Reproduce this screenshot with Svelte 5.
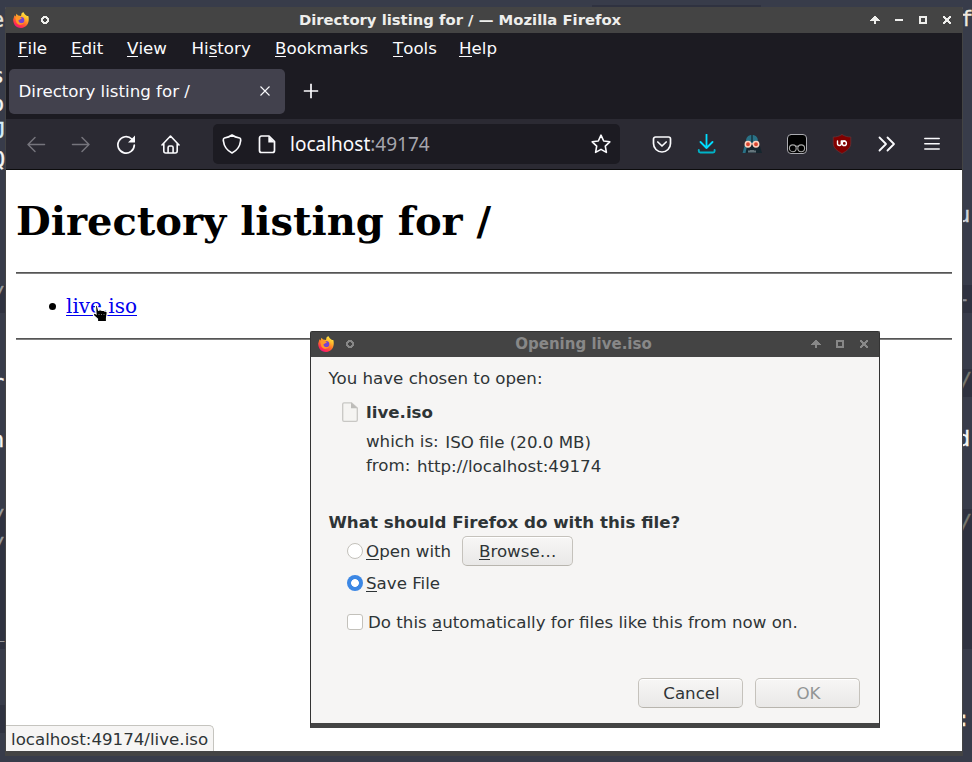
<script>
  const menus = [
    ['', 'F', 'ile', 18],
    ['', 'E', 'dit', 71],
    ['', 'V', 'iew', 127],
    ['Hi', 's', 'tory', 191.5],
    ['', 'B', 'ookmarks', 275],
    ['', 'T', 'ools', 393],
    ['', 'H', 'elp', 459]
  ];
  const left = [
    ['e', -9, 6, '#e8e4da'], ['s', -9, 62, '#f5f5f5'], ['o', -9, 90, '#f5f5f5'],
    ['J', -7, 117, '#d5eefa'], ['Q', -8, 146, '#f5f5f5'], ['/', -8, 281, '#999a9b'],
    ['r', -9, 369, '#f5f5f5'], ['n', -9, 426, '#f5f5f5'], ['/', -8, 504, '#999a9b'], ['/', -8, 532, '#999a9b'], ['_', -9, 616, '#999a9b']
  ];
  const right = [
    ['f', 960, 5, '#eee8de'], ['u', 957, 201, '#d0d6dd'], ['-', 957, 285, '#8c9099'], ['/', 959, 367, '#77786f'],
    ['d', 957, 425, '#f5f5f5'], ['/', 959, 509, '#77786f'], [':', 957, 705, '#f6efdc']
  ];
  const bands = [[0, 285, 28], [0, 509, 140], [0, 705, 28], [962, 285, 28], [962, 369, 28], [962, 509, 140]];
</script>

{#snippet fox()}
  <svg class="fox" viewBox="0 0 16 16">
    <defs>
      <linearGradient id="flame" x1=".8" y1="0" x2=".25" y2="1">
        <stop offset="0" stop-color="#fff34a" /><stop offset=".32" stop-color="#ffb82b" />
        <stop offset=".6" stop-color="#ff6a2b" /><stop offset=".85" stop-color="#ff2756" /><stop offset="1" stop-color="#e31587" />
      </linearGradient>
    </defs>
    <path fill="url(#flame)" d="M1.5 3.2 2.5 4.4 3.5 1.8 5 3.6 8 4 8.5 1.4 10.2 0 12 2.5 14 4 15.3 4.1C16.8 9.4 14.5 15.8 8.1 15.9 2.8 16 .1 12 .2 7.6Z" />
    <circle cx="8.1" cy="8.1" r="3.2" fill="#7542d3" />
    <path fill="#ff9727" d="M2.2 5.4 6 4.3 9 6.2 7 7.4 5.5 8.3C5.4 11 8.4 12.3 11 10.6 9.5 14 5 13.2 3.4 10.5Z" />
  </svg>
{/snippet}
{#snippet ring()}<svg class="px" viewBox="0 0 8 8"><path fill-rule="evenodd" d="M2 0h4v1h1v1h1v4H7v1H6v1H2V7H1V6H0V2h1V1h1zM3 2v1H2v2h1v1h2V5h1V3H5V2z" /></svg>{/snippet}
{#snippet up()}<svg class="px up" viewBox="0 0 10 8"><path d="M4 0h2v1h1v1h1v1h1v1h1v1H6v3H4V5H0V4h1V3h1V2h1V1h1z" /></svg>{/snippet}
{#snippet max()}<svg class="px" viewBox="0 0 8 8"><path fill-rule="evenodd" d="M0 0h8v8H0zM2 2v4h4V2z" /></svg>{/snippet}
{#snippet close()}<svg class="px" viewBox="0 0 8 8"><path d="M0 0h2v1h1v1h2V1h1V0h2v2H7v1H6v2h1v1h1v2H6V7H5V6H3v1H2v1H0V6h1V5h1V3H1V2H0z" /></svg>{/snippet}

<div class="desktop">
  {#each bands as [x, y, h]}<i class="band" style="left:{x}px;top:{y}px;height:{h}px"></i>{/each}
  {#each [...left, ...right] as [c, x, y, color]}
    <span class="term" style="left:{x}px;top:{y}px;color:{color}">{c}</span>
  {/each}
  <div class="topshade"></div>

  <section class="window">
    <header class="title">
      {@render fox()}{@render ring()}
      <b>Directory listing for / — Mozilla Firefox</b>
      <div class="controls">
        {@render up()}
        <svg class="px" viewBox="0 0 8 8"><path d="M0 3h8v2H0z" /></svg>
        {@render max()}{@render close()}
      </div>
    </header>
    <nav class="menu">
      {#each menus as [a, u, b, x], i}
        <span style="width:{(menus[i + 1]?.[3] ?? 530) - x}px">{a}<u>{u}</u>{b}</span>
      {/each}
    </nav>
    <div class="tabs">
      <div class="tab"><span>Directory listing for /</span>
        <svg width="10" height="10" viewBox="0 0 10 10"><path d="M.5.5l9 9m0-9-9 9" /></svg>
      </div>
      <svg class="plus" width="16" height="16" viewBox="0 0 16 16"><path d="M8 .8v14.4M.8 8h14.4" /></svg>
    </div>
    <div class="toolbar">
      <div class="navs">
        <svg class="dim" viewBox="0 0 20 20"><path d="M18.5 10.5H2M9 3.500l-7 7 7 7" /></svg>
        <svg class="dim" viewBox="0 0 20 20"><path d="M1.500 10.500H18M11 3.500l7 7-7 7" /></svg>
        <svg viewBox="0 0 20 20"><path stroke-width="1.7" d="M15.8 5A8.2 8.2 0 1 0 18.3 11" /><path fill="#fbfbfe" stroke="none" d="M19 1.500v7h-7z" /></svg>
        <svg viewBox="0 0 20 20"><path stroke-width="1.6" d="M1 11 9.500 2l8.500 9M2.800 9.500V17a2 2 0 0 0 2 2h9.400a2 2 0 0 0 2-2V9.500M7.100 19v-5.500q0-1.500 1.500-1.500h2q1.500 0 1.500 1.500V19" /></svg>
      </div>
      <div class="url">
        <svg viewBox="0 0 20 20"><path stroke-width="1.7" d="M10 1C7.500 2.800 5 3.500 2.400 4 1 4.300 1.200 5.400 1.400 7c.7 6 3.600 9.500 8.600 12 5-2.500 7.900-6 8.600-12 .2-1.600.4-2.700-1-3-2.600-.5-5.100-1.200-7.600-3Z" /></svg>
        <svg viewBox="0 0 20 20"><path stroke-width="1.7" d="M4.500 2H12l5.500 5.500v9a2 2 0 0 1-2 2h-11a2 2 0 0 1-2-2V4a2 2 0 0 1 2-2Z" /><path fill="#fbfbfe" stroke="none" d="M11.300 2v6.400h6.500z" /></svg>
        <span class="address">localhost<em>:49174</em></span>
        <svg viewBox="0 0 20 20"><path stroke-width="1.6" d="M10 1.200 12.700 7l6.100.8-4.500 4.300 1.100 6.300L10 15.400l-5.400 3 1.100-6.300L1.200 7.800 7.300 7Z" /></svg>
      </div>
      <div class="actions">
        <svg viewBox="0 0 20 20"><path stroke-width="1.7" d="M3.500 3h13a2 2 0 0 1 2 2v4.500a8.500 8.500 0 0 1-17 0V5a2 2 0 0 1 2-2ZM5.800 8l4.200 4 4.200-4" /></svg>
        <svg class="down" viewBox="0 0 20 20"><path d="M9.500 .5V14M3.500 8l6 6 6-6" /><path stroke="#00b3c8" stroke-width="1.900" d="M1.800 16v1q0 1.500 1.500 1.500h12.800q1.500 0 1.500-1.500v-1" /></svg>
        <svg viewBox="0 0 20 20" class="vader"><path fill="#15262f" d="M5 4 2.500 12 0 19h20l-2.500-8L15 4Z" /><path fill="#2a7186" d="M4 9C3.500 3.500 6 1 10 1s6.500 2.500 6 8ZM3 10l-2.500 9h3L5 12Z" /><path fill="#163842" d="M9.200 1h1.600v7H9.200z" /><circle cx="6" cy="10.300" r="2.700" fill="#d7452f" stroke="#ffd3c0" stroke-width="1.500" /><circle cx="14" cy="10.300" r="2.700" fill="#d7452f" stroke="#ffd3c0" stroke-width="1.500" /><path stroke="#ffc9b5" stroke-width="1.200" d="M8.500 9.800h3" /><path stroke="#b6c4ca" stroke-width="1" stroke-linecap="butt" d="M7 18.500v-2m2 2v-2.500m2 2.500v-2.500m2 2.500v-2" /></svg>
        <svg viewBox="0 0 20 20"><rect x=".5" y=".5" width="19" height="19" rx="3.500" fill="#000" stroke="#aaaab0" stroke-width="1" /><g stroke="#a5a5a5" stroke-width="1.100"><circle cx="5.800" cy="14.300" r="3.400" /><circle cx="14.200" cy="14.300" r="3.400" /><path d="M8.500 12.500q1.500-1 3 0" /></g></svg>
        <svg viewBox="0 0 20 20"><path fill="#800000" stroke="#65373b" stroke-width=".7" d="M10 .5C7 2.500 4 3 1.200 3v6c0 5 4 8 8.800 10.500C14.800 17 18.800 14 18.800 9V3C16 3 13 2.500 10 .5Z" /><path stroke="#fff" stroke-width="1.400" d="M5.500 7v2.800c0 2.200 3.800 2.200 3.800 0V7H13" /><circle cx="12.300" cy="9.400" r="2.100" stroke="#fff" stroke-width="1.400" /></svg>
        <svg viewBox="0 0 20 20"><path stroke-width="1.800" d="M2.500 3.500 9 10l-6.500 6.500M10.500 3.500 17 10l-6.500 6.500" /></svg>
        <svg viewBox="0 0 20 20"><path stroke-width="1.500" d="M2.800 4.500h14.400M2.800 9.800h14.400M2.800 15.100h14.400" /></svg>
      </div>
    </div>
    <main>
      <h1>Directory listing for /</h1>
      <hr />
      <ul><li><a href="#live">live.iso</a></li></ul>
      <hr />
    </main>
    <div class="status">localhost:49174/live.iso</div>
  </section>

  <svg class="cursor" width="18" height="20" viewBox="0 0 18 20"><path fill="#000" stroke="#fff" stroke-width="1.200" d="M4.500 1.500Q5.500.8 6.500 2l1 4.200 2.100-.5 1.400.8 1.700-.2 1.200.8h1.400q1 .5.900 2L15.500 14v3.500H6.500V15L2.500 11.500v-2q1-.9 2.500.4Z" /><path stroke="#777" d="M7.500 10.500h1m1.500 0h1m1.500 0h1" /></svg>

  <section class="dialog">
    <header class="title muted">
      {@render fox()}{@render ring()}
      <b>Opening live.iso</b>
      <div class="controls">{@render up()}{@render max()}{@render close()}</div>
    </header>
    <div class="body">
      <p class="intro">You have chosen to open:</p>
      <div class="file">
        <svg width="16" height="20" viewBox="0 0 16 20"><path fill="#f5f4f2" stroke="#c8c7c4" stroke-width="1.300" d="M2 .8h7.500L15.300 6v12a1.300 1.300 0 0 1-1.300 1.300H2A1.300 1.300 0 0 1 .7 18V2A1.300 1.300 0 0 1 2 .8Z" /><path fill="#bdbcb9" d="M9 .5V6.200h6.500z" /></svg>
        <b>live.iso</b>
      </div>
      <div class="meta"><span>which is:</span><span class="value">ISO file (20.0 MB)</span></div>
      <div class="meta"><span>from:</span><span class="value">http://localhost:49174</span></div>
      <b class="question">What should Firefox do with this file?</b>
      <div class="option open"><i class="radio"></i><span class="label"><u>O</u>pen with</span><button><span><u>B</u>rowse…</span></button></div>
      <div class="option save"><i class="radio on"></i><span class="label"><u>S</u>ave File</span></div>
      <div class="option auto"><i class="check"></i><span class="label">Do this <u>a</u>utomatically for files like this from now on.</span></div>
      <div class="buttons"><button>Cancel</button><button disabled>OK</button></div>
    </div>
  </section>
</div>

<style>
  :global(body) { margin: 0; }
  .desktop { position: relative; width: 972px; height: 762px; overflow: hidden; background: #383c4a; font: 16.67px/20px "DejaVu Sans", sans-serif; }
  .desktop * { box-sizing: border-box; }
  .band { position: absolute; width: 10px; background: #2f3240; }
  .term { position: absolute; font: 22px/28px "DejaVu Sans Mono", monospace; -webkit-text-stroke: .3px currentColor; }
  .topshade { position: absolute; left: 592px; top: 5px; width: 169px; height: 2px; background: #2f3240; }
  u { text-decoration: none; box-shadow: 0 1px currentColor; display: inline-block; line-height: 14px; }
  svg { fill: none; flex: none; display: block; }
  .window { position: absolute; left: 5px; top: 7px; width: 958px; height: 749px; border: 1px solid #444; border-top: 0; border-bottom: 5px solid #444; display: flex; flex-direction: column; background: #fff; border-radius: 2px 2px 0 0; }
  .title { position: relative; height: 26px; flex: none; display: flex; align-items: center; background: #444; color: #eeeeec; padding: 0 11px 0 7px; }
  .title b { position: absolute; left: -48px; right: 0; text-align: center; font-size: 14.8px; line-height: 26px; pointer-events: none; }
  .fox { width: 16px; height: 16px; margin-right: 12px; }
  .px { width: 8px; height: 8px; fill: currentColor; shape-rendering: crispEdges; }
  .px.up { width: 10px; margin-right: -1px; }
  .controls { margin-left: auto; display: flex; gap: 16px; }
  .menu { height: 36px; flex: none; background: #1c1b22; color: #fbfbfe; display: flex; padding: 6px 0 0 12px; white-space: nowrap; }
  .tabs { height: 50px; flex: none; background: #1c1b22; color: #fbfbfe; display: flex; padding-left: 3px; }
  .tab { width: 276px; height: 45px; border-radius: 5px; background: #42414d; display: flex; align-items: center; justify-content: space-between; padding: 0 15px 0 9.500px; }
  .tab svg, .plus { stroke: #fbfbfe; stroke-width: 1.1; }
  .tab svg { margin-top: -1px; }
  .plus { margin: 14px 0 0 18px; stroke-width: 1.7; }
  .toolbar { height: 51px; flex: none; background: #2b2a33; border-bottom: 1px solid #0c0c0d; display: flex; align-items: center; }
  .toolbar svg { width: 20px; height: 20px; stroke: #fbfbfe; stroke-width: 1.5; stroke-linejoin: round; stroke-linecap: round; }
  .toolbar .vader { stroke: none; }
  .toolbar .dim { stroke: #75747c; }
  .toolbar .down { stroke: #00ddff; stroke-width: 1.8; }
  .navs { display: flex; gap: 25px; width: 207px; padding-left: 20px; }
  .url { width: 407px; height: 40px; border-radius: 5px; background: #1c1b22; display: flex; align-items: center; padding: 0 9px; }
  .url svg + svg { margin-left: 15px; }
  .address { margin: 0 0 0 13px; flex: 1; color: #fbfbfe; font: 19px/24px "Noto Sans", sans-serif; }
  .address em { font-style: normal; color: #a5a5ad; }
  .actions { display: flex; gap: 25px; padding-left: 32px; }
  main { padding: 27px 10px 0; font: 20px/24px "DejaVu Serif", serif; color: #000; }
  h1 { margin: 0 0 28px; font-size: 40px; line-height: 47px; }
  hr { height: 2px; margin: 0; border: 0; background: #808080; border-top: 1px solid #555; }
  ul { margin: 20px 0; padding: 0; list-style: none; }
  li { display: flex; align-items: center; padding-left: 33px; }
  li::before { content: ''; width: 7px; height: 7px; margin: 1px 10px 0 0; border-radius: 50%; background: #000; }
  a { color: #0000ee; text-underline-offset: 2px; text-decoration-thickness: 1px; }
  .status { margin-top: auto; width: 208px; height: 26px; border: 1px solid #c5c4bf; border-left: 0; border-bottom: 0; border-radius: 0 5px 0 0; background: #f6f5f4; color: #2e3436; padding: 4px 0 0 5px; }
  .cursor { position: absolute; left: 91px; top: 304px; }
  .dialog { position: absolute; left: 310px; top: 331px; width: 570px; height: 397px; border: 1px solid #333; border-bottom: 5px solid #444; background: #f6f5f4; color: #2e3436; border-radius: 2px 2px 0 0; }
  .title.muted { height: 25px; color: #888; padding-bottom: 1px; }
  .title.muted b { left: -23px; font-size: 15px; line-height: 24px; top: 0; }
  .body { display: flex; flex-direction: column; padding: 12px 19px 0 17.500px; height: 366px; }
  .intro { margin: 0; }
  .file { display: flex; gap: 8px; align-items: center; margin: 13px 0 8px 13.500px; height: 22px; }
  .file svg { margin-top: -2px; }
  .meta { display: flex; gap: 6.500px; padding-left: 37.500px; height: 24px; }
  .value { padding-top: 1px; }
  .question { margin-top: 33px; height: 20px; }
  .option { display: flex; align-items: center; padding-left: 18.500px; height: 30px; gap: 3px; }
  .label { padding-top: 2px; }
  .open { margin-top: 3px; }
  .save { margin-top: 2px; }
  .auto { margin-top: 9px; gap: 5px; }
  .radio, .check { width: 16px; height: 16px; background: #fff; border: 1px solid #c3c1bb; border-radius: 50%; }
  .radio.on { width: 16px; border: 0; background: radial-gradient(circle, #fff 3.500px, #3c87e4 4.300px); }
  .check { border-radius: 3px; }
  button { height: 30px; border: 1px solid #c5c2bc; border-bottom-color: #b8b5ae; border-radius: 5px; background: linear-gradient(#f7f6f5, #e9e8e7); box-shadow: inset 0 1px #fff; color: #2e3436; font: inherit; padding: 2px 0 0; }
  .option button { width: 111px; margin-left: 8px; }
  .buttons { margin-top: 41px; display: flex; justify-content: flex-end; gap: 12px; }
  .buttons button { width: 105px; padding-left: 2px; }
  button:disabled { color: #929595; }
</style>
